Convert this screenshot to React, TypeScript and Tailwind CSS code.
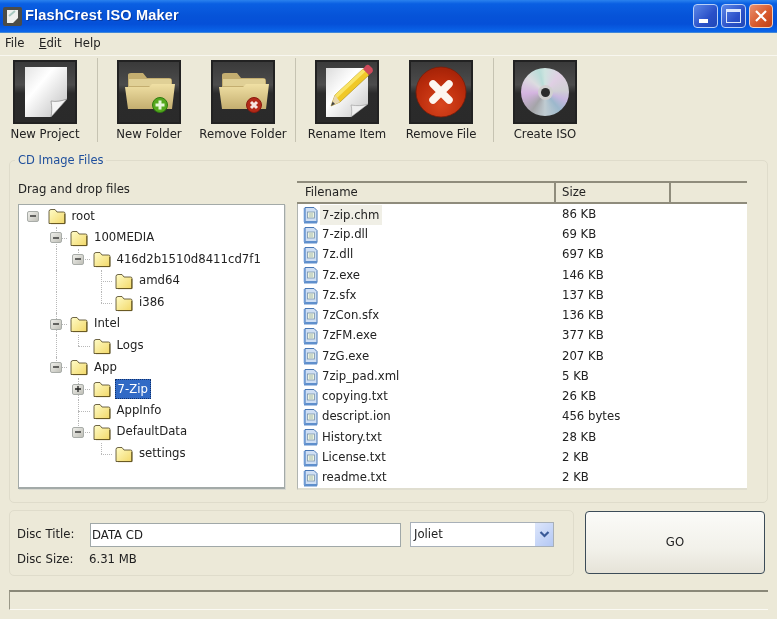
import type { ReactNode } from 'react'

const FONT = "font-['DejaVu_Sans','Liberation_Sans',sans-serif]"

function Frame({ children }: { children: ReactNode }) {
  return (
    <div className="w-16 h-16 border-2 border-[#222] bg-[linear-gradient(180deg,#3a3a3a_0%,#4c4c4c_38%,#2b2b2b_52%,#2a2a2a_100%)] flex items-center justify-center">
      {children}
    </div>
  )
}

function PageIcon() {
  return (
    <svg width="60" height="60" viewBox="0 0 60 60">
      <defs>
        <linearGradient id="pg" x1="0" y1="0" x2="1" y2="1">
          <stop offset="0" stopColor="#e4e4e4" />
          <stop offset="0.35" stopColor="#ffffff" />
          <stop offset="1" stopColor="#bdbdbd" />
        </linearGradient>
      </defs>
      <path d="M10 5H52V37L36 55H10Z" fill="url(#pg)" />
      <path d="M52 37C47 39 41 40 36 39C37 45 37 50 36 55Z" fill="#f4f4f4" stroke="#777" strokeWidth="0.6" />
    </svg>
  )
}

function FolderBig({ badge, id }: { badge: 'add' | 'del'; id: string }) {
  return (
    <svg width="60" height="60" viewBox="0 0 60 60">
      <defs>
        <linearGradient id={id} x1="0" y1="0" x2="0" y2="1">
          <stop offset="0" stopColor="#f0e0a4" />
          <stop offset="1" stopColor="#c4ae70" />
        </linearGradient>
      </defs>
      <path d="M9 13Q9 11 12 11H24L28 16H50Q53 16 53 19V26H9Z" fill="#c4ae70" />
      <path d="M10 17H52V24H10Z" fill="#e0d096" />
      <path d="M6 25H30L33 22H56L53 47H9Z" fill={`url(#${id})`} />
      {badge === 'add' ? (
        <g>
          <circle cx="41" cy="43" r="7.5" fill="#55a81e" stroke="#2e7a10" />
          <path d="M41 38.5V47.5M36.5 43H45.5" stroke="#e6f7da" strokeWidth="3" />
        </g>
      ) : (
        <g>
          <circle cx="41" cy="43" r="7.5" fill="#b32a18" stroke="#8a1a10" />
          <path d="M38 40L44 46M44 40L38 46" stroke="#f6e6e0" strokeWidth="3" />
        </g>
      )}
    </svg>
  )
}

function RenameIcon() {
  return (
    <svg width="60" height="60" viewBox="0 0 60 60">
      <defs>
        <linearGradient id="rn" x1="0" y1="0" x2="1" y2="1">
          <stop offset="0" stopColor="#dcdcdc" />
          <stop offset="0.4" stopColor="#ffffff" />
          <stop offset="1" stopColor="#c4c4c4" />
        </linearGradient>
      </defs>
      <path d="M9 6H51V42L34 55H9Z" fill="url(#rn)" />
      <path d="M51 42C46 44 40 44 34 43C35 47 35 52 34 55Z" fill="#eeeeee" stroke="#888" strokeWidth="0.5" />
      <path d="M14 44L18 33L46 7L52 13L23 40Z" fill="#f0c828" stroke="#a98a10" strokeWidth="0.6" />
      <path d="M18 33L46 7L48.5 9.5L20 36Z" fill="#f9e466" />
      <path d="M14 44L18 33L23 40Z" fill="#e8d8b0" />
      <path d="M14 44L15.6 39.5L18 42Z" fill="#444" />
      <path d="M46 7L49 3.5Q51 2 53 4L55.5 6.5Q56.5 9 55 10.5L52 13Z" fill="#cf4a5a" />
    </svg>
  )
}

function RedXIcon() {
  return (
    <svg width="60" height="60" viewBox="0 0 60 60">
      <defs>
        <radialGradient id="rx" cx="0.5" cy="0.75" r="0.7">
          <stop offset="0" stopColor="#d9461e" />
          <stop offset="0.7" stopColor="#bb2c0c" />
          <stop offset="1" stopColor="#a82408" />
        </radialGradient>
      </defs>
      <circle cx="30" cy="30" r="25" fill="url(#rx)" stroke="#7c1c08" strokeWidth="0.8" />
      <path d="M22 22L38 38M38 22L22 38" stroke="#fdf6f0" strokeWidth="7.5" strokeLinecap="round" />
    </svg>
  )
}

function CdIcon() {
  return (
    <div className="w-[48px] h-[48px] rounded-full flex items-center justify-center bg-[conic-gradient(#cfe4e0_0deg,#e0cfe4_40deg,#d0d0d4_85deg,#c8b8e0_110deg,#9cb8cc_140deg,#c0ccd2_180deg,#a4a4a8_215deg,#d4b4e0_265deg,#dcdce0_310deg,#b8dcd8_345deg,#cfe4e0_360deg)]">
      <div className="w-[15px] h-[15px] rounded-full bg-[#d0d0d0] flex items-center justify-center">
        <div className="w-[9px] h-[9px] rounded-full bg-[#2c2c2c]" />
      </div>
    </div>
  )
}

function ToolItem({ label, width, children }: { label: string; width: string; children: ReactNode }) {
  return (
    <div className={`${width} flex flex-col items-center`}>
      <Frame>{children}</Frame>
      <div className="mt-[2px] text-[11.7px] leading-[16px] text-[#222] whitespace-nowrap">{label}</div>
    </div>
  )
}

function ToolSep({ className }: { className: string }) {
  return <div className={`${className} w-px h-[84px] bg-[#c6c3b2] mr-[4px] -mt-[2px]`} />
}

function Folder() {
  return (
    <svg width="18" height="18" viewBox="0 0 18 18" className="shrink-0">
      <defs>
        <linearGradient id="fo" x1="0" y1="0" x2="1" y2="1">
          <stop offset="0" stopColor="#fffcc8" />
          <stop offset="1" stopColor="#f2d868" />
        </linearGradient>
      </defs>
      <path d="M1 4.5Q1 2.5 3 2.5H7L9 5H15.5Q17 5 17 6.5V16.5H1Z" fill="url(#fo)" stroke="#4a4020" strokeWidth="0.8" strokeLinejoin="round" />
      <path d="M16.8 7V16.6H3" fill="none" stroke="#6a5a20" strokeWidth="1" />
    </svg>
  )
}

function Expander({ open }: { open: boolean }) {
  return (
    <div className="relative w-[12px] h-[11px] rounded-[2px] border border-[#a8aca8] bg-[linear-gradient(135deg,#eeeeea,#c0c0b8)] flex items-center justify-center">
      <svg width="8" height="8" viewBox="0 0 8 8">
        <path d={open ? 'M1 4H7' : 'M1 4H7M4 1V7'} stroke="#222" strokeWidth="1.3" />
      </svg>
    </div>
  )
}

type TreeRow = {
  name: string
  depth: number
  exp?: '-' | '+'
  guides?: number[]
  last?: boolean
  selected?: boolean
}

const treeRows: TreeRow[] = [
  { name: 'root', depth: 0, exp: '-' },
  { name: '100MEDIA', depth: 1, exp: '-' },
  { name: '416d2b1510d8411cd7f1', depth: 2, exp: '-', guides: [1], last: true },
  { name: 'amd64', depth: 3, guides: [1] },
  { name: 'i386', depth: 3, guides: [1], last: true },
  { name: 'Intel', depth: 1, exp: '-' },
  { name: 'Logs', depth: 2, guides: [1], last: true },
  { name: 'App', depth: 1, exp: '-', last: true },
  { name: '7-Zip', depth: 2, exp: '+', selected: true },
  { name: 'AppInfo', depth: 2 },
  { name: 'DefaultData', depth: 2, exp: '-', last: true },
  { name: 'settings', depth: 3, last: true },
]

function Tree() {
  return (
    <div className="h-[285px] border border-[#a3aaa8] border-b-2 bg-white pl-[3px] pt-[0.5px] shadow-[1px_1px_0_#d8d8d0]">
      {treeRows.map((row) => (
        <div key={row.name} className="flex items-center h-[21.6px]">
          {Array.from({ length: row.depth + 1 }).map((_, col) => (
            <div key={col} className="relative w-[22.5px] h-full flex items-center justify-center shrink-0">
              {(row.guides?.includes(col) || (col === row.depth && row.depth > 0)) && (
                <div
                  className={
                    col === row.depth && row.last
                      ? 'absolute left-[11px] top-0 h-1/2 border-l border-dotted border-[#b8b8b8]'
                      : 'absolute left-[11px] top-0 h-full border-l border-dotted border-[#b8b8b8]'
                  }
                />
              )}
              {col === row.depth && row.depth > 0 && (
                <div className="absolute left-[11px] right-0 top-1/2 border-t border-dotted border-[#b8b8b8]" />
              )}
              {col === row.depth && row.exp && <Expander open={row.exp === '-'} />}
            </div>
          ))}
          <div className="ml-[3px]">
            <Folder />
          </div>
          <span
            className={
              row.selected
                ? 'ml-[4px] px-[2px] h-[20px] leading-[18px] bg-[#316ac5] text-white border border-dotted border-[#10306a] text-[11.7px] whitespace-nowrap'
                : 'ml-[6px] text-[11.7px] text-[#222] whitespace-nowrap'
            }
          >
            {row.name}
          </span>
        </div>
      ))}
    </div>
  )
}

function FileIcon() {
  return (
    <svg width="16" height="18" viewBox="0 0 16 18" className="shrink-0">
      <path d="M2 1.5H11L14 4.5V16.5H2Z" fill="#cfdff4" stroke="#4a78b4" />
      <path d="M1 15H14V17.5H1Z" fill="#5f8fcc" />
      <path d="M1.5 2V16" stroke="#6f9cd6" strokeWidth="1.6" />
      <rect x="4.5" y="6" width="7" height="6" fill="#eef4e0" stroke="#7a94ac" strokeWidth="0.8" />
      <path d="M6 8H10M6 10H10" stroke="#8aa49c" strokeWidth="0.7" />
    </svg>
  )
}

const files = [
  ['7-zip.chm', '86 KB'],
  ['7-zip.dll', '69 KB'],
  ['7z.dll', '697 KB'],
  ['7z.exe', '146 KB'],
  ['7z.sfx', '137 KB'],
  ['7zCon.sfx', '136 KB'],
  ['7zFM.exe', '377 KB'],
  ['7zG.exe', '207 KB'],
  ['7zip_pad.xml', '5 KB'],
  ['copying.txt', '26 KB'],
  ['descript.ion', '456 bytes'],
  ['History.txt', '28 KB'],
  ['License.txt', '2 KB'],
  ['readme.txt', '2 KB'],
]

function FileList() {
  return (
    <div className="w-[450px] h-[308px] flex flex-col">
      <div className="h-[23px] flex border-y-2 border-[#8f8c7c] bg-[#ece9d8] text-[11.7px] text-[#222] leading-[19px]">
        <div className="w-[259px] pl-[8px] border-r-2 border-[#8f8c7c]">Filename</div>
        <div className="w-[115px] pl-[6px] border-r-2 border-[#8f8c7c]">Size</div>
      </div>
      <div className="flex-1 bg-white border-l border-[#b0b4b0] border-b-2 border-b-[#e0ded0] pt-[0.5px]">
        {files.map(([name, size], i) => (
          <div key={name} className="flex items-center h-[20.25px] text-[11.7px] text-[#222]">
            <div className="w-[258px] pl-[5px] flex items-center">
              <FileIcon />
              <span className={i === 0 ? 'ml-[1px] pl-[2px] pr-[3px] h-[20px] leading-[20px] bg-[#f0efe6]' : 'ml-[1px] pl-[2px]'}>{name}</span>
            </div>
            <div className="pl-[6px]">{size}</div>
          </div>
        ))}
      </div>
    </div>
  )
}

export default function App() {
  return (
    <div className={`${FONT} w-[777px] h-[619px] overflow-hidden bg-[#ece9d8] flex flex-col blur-[0.4px]`}>
      {/* title bar */}
      <div className="h-[33px] shrink-0 flex items-center pl-[3px] pr-[4px] border-b border-[#3f86d8] bg-[linear-gradient(180deg,#2a82ee_0%,#0a5fe2_12%,#0653d8_50%,#0550d8_75%,#0b66ea_100%)]">
        <svg width="19" height="19" viewBox="0 0 19 19" className="shrink-0">
          <rect x="0" y="0" width="19" height="19" rx="2" fill="#4c4c48" />
          <path d="M4 3H15V11L10 16H4Z" fill="#f0f0ee" />
          <path d="M6 9L12 4" stroke="#a8c8c0" strokeWidth="2" />
        </svg>
        <span className="ml-[3px] font-['Liberation_Sans',sans-serif] text-[14.5px] font-bold text-white tracking-[0.2px] whitespace-nowrap [text-shadow:1px_1px_0_#0a3aa0]">FlashCrest ISO Maker</span>
        <div className="ml-auto flex gap-[3px]">
          <div className="w-[25px] h-[24px] rounded-[4px] border border-[#b8d0f8] bg-[linear-gradient(135deg,#5c88e8,#2a50c8_60%,#2048b8)] flex items-end pl-[5px] pb-[4px]">
            <div className="w-[9px] h-[4px] bg-white" />
          </div>
          <div className="w-[25px] h-[24px] rounded-[4px] border border-[#b8d0f8] bg-[linear-gradient(135deg,#5c88e8,#2a50c8_60%,#2048b8)] flex items-center justify-center">
            <div className="w-[15px] h-[14px] border border-[#dce8fc] border-t-[3px]" />
          </div>
          <div className="w-[24px] h-[24px] rounded-[4px] border border-[#f0d0c0] bg-[linear-gradient(135deg,#e89070,#d85a2c_55%,#c04018)] flex items-center justify-center">
            <svg width="14" height="14" viewBox="0 0 14 14">
              <path d="M2 2L12 12M12 2L2 12" stroke="#fff" strokeWidth="2.2" />
            </svg>
          </div>
        </div>
      </div>

      {/* menu */}
      <div className="h-[23px] shrink-0 flex items-center pl-[5px] text-[11.7px] text-[#222] border-b border-[#f8f7f0]">
        <span className="w-[34px]">File</span>
        <span className="w-[35px]">
          <span className="underline">E</span>dit
        </span>
        <span>Help</span>
      </div>

      {/* toolbar */}
      <div className="h-[94px] shrink-0 flex items-start pt-[4px]">
        <ToolItem label="New Project" width="w-[90px]">
          <PageIcon />
        </ToolItem>
        <ToolSep className="ml-[7px]" />
        <ToolItem label="New Folder" width="w-[94px]">
          <FolderBig badge="add" id="fa" />
        </ToolItem>
        <ToolItem label="Remove Folder" width="w-[94px]">
          <FolderBig badge="del" id="fd" />
        </ToolItem>
        <ToolSep className="ml-[5px]" />
        <ToolItem label="Rename Item" width="w-[94px]">
          <RenameIcon />
        </ToolItem>
        <ToolItem label="Remove File" width="w-[94px]">
          <RedXIcon />
        </ToolItem>
        <ToolSep className="ml-[5px]" />
        <ToolItem label="Create ISO" width="w-[94px]">
          <CdIcon />
        </ToolItem>
      </div>

      {/* cd image files */}
      <fieldset className="mx-[9px] mt-[2px] w-[759px] h-[351px] shrink-0 border border-[#dfdccb] rounded-[5px]">
        <legend className="ml-[5px] px-[3px] text-[11.5px] leading-[16px] text-[#1f4f9c]">CD Image Files</legend>
        <div className="flex pt-[13px] pl-[8px]">
          <div className="w-[267px]">
            <div className="h-[16px] mb-[7px] text-[11.7px] leading-[16px] text-[#222]">Drag and drop files</div>
            <Tree />
          </div>
          <div className="ml-[12px]">
            <FileList />
          </div>
        </div>
      </fieldset>

      {/* bottom controls */}
      <div className="mt-[7px] ml-[9px] flex items-start shrink-0">
        <div className="w-[565px] h-[66px] border border-[#dfdccb] rounded-[5px] pt-[11px] pl-[7px] text-[11.7px] text-[#222]">
          <div className="flex items-center">
            <span className="w-[73px]">Disc Title:</span>
            <input
              readOnly
              value="DATA CD"
              className="w-[311px] h-[24px] bg-white border border-[#a0a8a8] pl-[1px] text-[11.7px] text-[#222] outline-none"
            />
            <div className="ml-[9px] w-[144px] h-[25px] bg-white border border-[#a8b0b8] flex items-center pl-[3px]">
              <span>Joliet</span>
              <div className="ml-auto w-[18px] h-full bg-[linear-gradient(135deg,#dde6fb,#b4c8f4)] flex items-center justify-center">
                <svg width="11" height="9" viewBox="0 0 11 9">
                  <path d="M1.5 2L5.5 6L9.5 2" fill="none" stroke="#3a5a98" strokeWidth="2.2" />
                </svg>
              </div>
            </div>
          </div>
          <div className="flex items-center mt-[4px]">
            <span className="w-[72px]">Disc Size:</span>
            <span>6.31 MB</span>
          </div>
        </div>
        <button className="ml-[11px] mt-[1px] w-[180px] h-[63px] rounded-[4px] border border-[#3c4c58] bg-[linear-gradient(180deg,#fbfbf8,#f2f1ea_60%,#e6e3d8)] text-[11.7px] text-[#222]">
          GO
        </button>
      </div>

      {/* status */}
      <div className="mt-[14px] ml-[9px] w-[759px] h-[20px] shrink-0 border-t-2 border-l border-t-[#8a8878] border-l-[#9a9888] border-b border-b-[#fbfaf4] bg-[#ece9d8]" />
    </div>
  )
}
